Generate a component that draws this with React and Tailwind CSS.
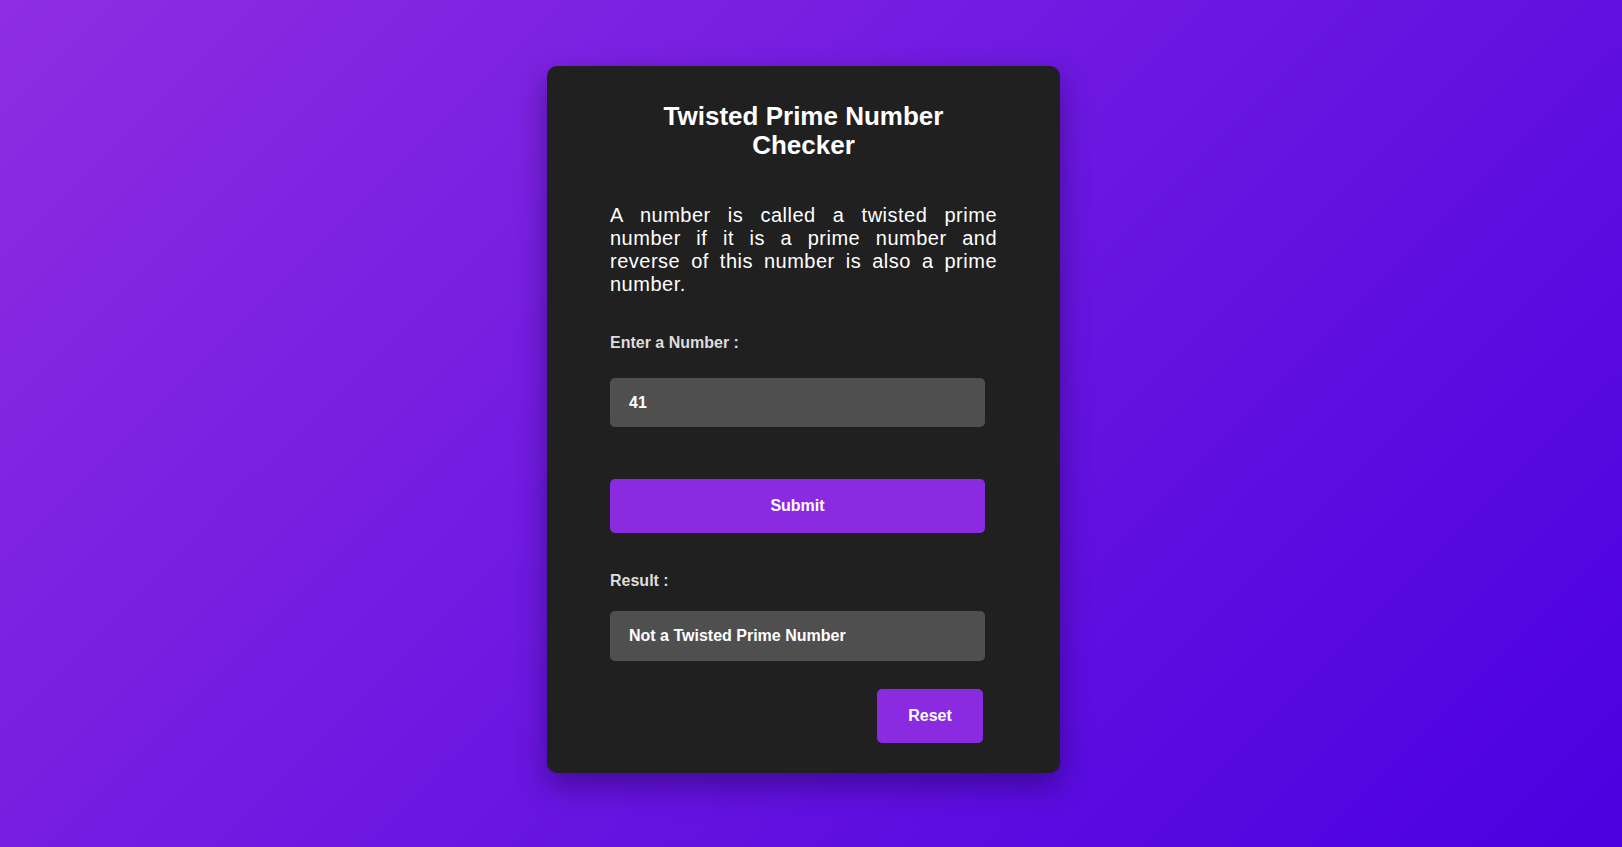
export default function App() {
  return (
    <div
      className="min-h-screen w-full bg-[linear-gradient(135deg,#8e2de2,#4a00e0)] flex justify-center pr-[15px] pt-[66px]"
      style={{ fontFamily: '"Liberation Sans", Arial, sans-serif' }}
    >
      <div className="w-[513px] h-[707px] bg-[#202020] rounded-[10px] shadow-[0_12px_30px_rgba(20,0,60,0.45)] pt-[36px] flex flex-col">
        <h2 className="text-white font-bold text-[26px] leading-[29px] text-center mx-auto w-[320px]">
          Twisted Prime Number Checker
        </h2>

        <p className="text-white text-[20px] leading-[23px] tracking-[0.5px] text-justify w-[387px] mx-auto mt-[44px]">
          A number is called a twisted prime number if it is a prime number and reverse of this number is also a prime number.
        </p>

        <div className="pl-[63px] w-full">
          <label className="block text-[#dddddd] font-bold text-[16px] leading-[18px] mt-[38px]">
            Enter a Number :
          </label>
          <div className="mt-[26px] w-[375px] h-[49px] bg-[#4f4f4f] rounded-[5px] flex items-center px-[19px] text-white font-bold text-[16px]">
            41
          </div>
          <button className="mt-[52px] w-[375px] h-[54px] bg-[#8a2be2] rounded-[5px] text-white font-bold text-[16px]">
            Submit
          </button>
          <label className="block text-[#dddddd] font-bold text-[16px] leading-[18px] mt-[39px]">
            Result :
          </label>
          <div className="mt-[21px] w-[375px] h-[50px] bg-[#4f4f4f] rounded-[5px] flex items-center px-[19px] text-white font-bold text-[16px]">
            Not a Twisted Prime Number
          </div>
          <div className="w-[375px] flex justify-end pr-[2px]">
            <button className="mt-[28px] w-[106px] h-[54px] bg-[#8a2be2] rounded-[5px] text-white font-bold text-[16px]">
              Reset
            </button>
          </div>
        </div>
      </div>
    </div>
  )
}
